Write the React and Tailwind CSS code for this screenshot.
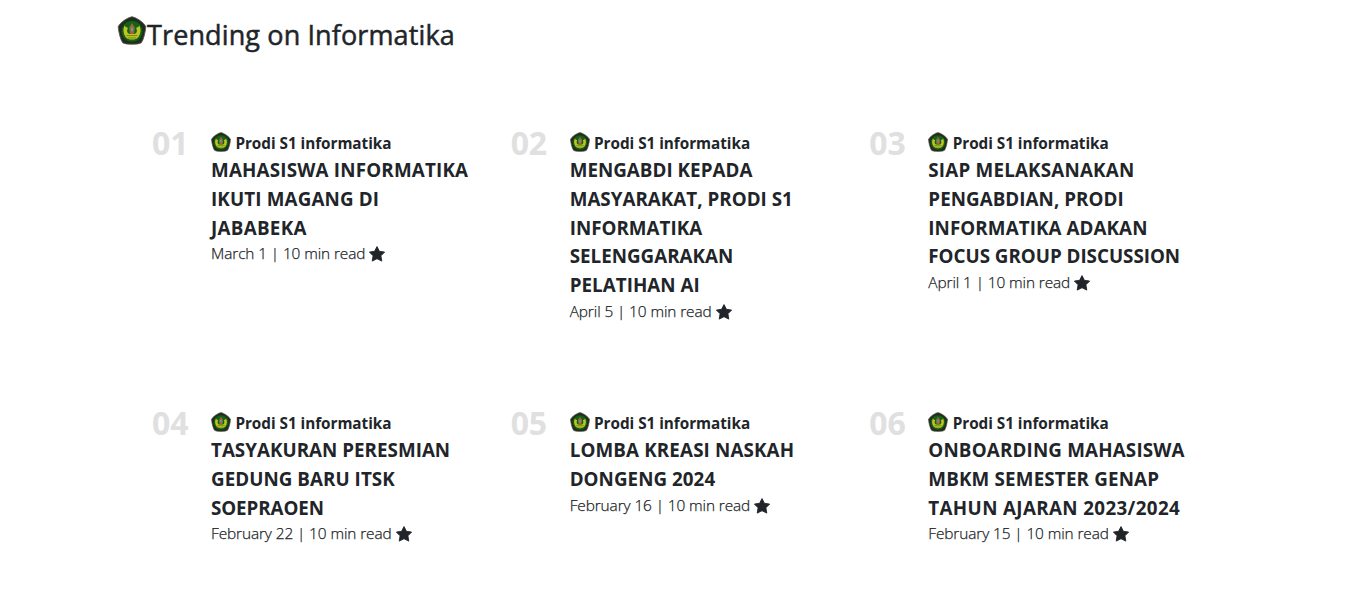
const articles = [
  {
    no: "01",
    lines: [
      ["MAHASISWA INFORMATIKA", "tracking-[0.19px]"],
      ["IKUTI MAGANG DI", "tracking-[0.14px]"],
      ["JABABEKA", "tracking-[0.3px]"],
    ],
    meta: "March 1 | 10 min read",
  },
  {
    no: "02",
    lines: [
      ["MENGABDI KEPADA", "tracking-[0.03px]"],
      ["MASYARAKAT, PRODI S1", "tracking-[0.02px]"],
      ["INFORMATIKA", "tracking-[0.01px]"],
      ["SELENGGARAKAN", "tracking-[0.01px]"],
      ["PELATIHAN AI", "tracking-[0.05px]"],
    ],
    meta: "April 5 | 10 min read",
  },
  {
    no: "03",
    lines: [
      ["SIAP MELAKSANAKAN", "tracking-[0.2px]"],
      ["PENGABDIAN, PRODI", "tracking-[0.05px]"],
      ["INFORMATIKA ADAKAN", "tracking-[0.08px]"],
      ["FOCUS GROUP DISCUSSION", "tracking-[-0.02px]"],
    ],
    meta: "April 1 | 10 min read",
  },
  {
    no: "04",
    lines: [
      ["TASYAKURAN PERESMIAN", "tracking-[0.02px]"],
      ["GEDUNG BARU ITSK", "tracking-[0.05px]"],
      ["SOEPRAOEN", "tracking-[-0.09px]"],
    ],
    meta: "February 22 | 10 min read",
  },
  {
    no: "05",
    lines: [
      ["LOMBA KREASI NASKAH", "tracking-[0.14px]"],
      ["DONGENG 2024", "tracking-[0.05px]"],
    ],
    meta: "February 16 | 10 min read",
  },
  {
    no: "06",
    lines: [
      ["ONBOARDING MAHASISWA", "tracking-[0.17px]"],
      ["MBKM SEMESTER GENAP", "tracking-[0.17px]"],
      ["TAHUN AJARAN 2023/2024", "tracking-[0.36px]"],
    ],
    meta: "February 15 | 10 min read",
  },
];

function Emblem({ className }) {
  return (
    <svg viewBox="0 0 28 28" className={className} aria-hidden="true">
      <path d="M14 .7 Q16.5 .9 21.4 4.1 Q26.4 7.6 27.3 10.2 Q27.3 13 26 18.4 Q24.4 24.4 22.8 26 Q20.5 27.3 14 27.3 Q7.5 27.3 5.2 26 Q3.6 24.4 2 18.4 Q.7 13 .7 10.2 Q1.6 7.6 6.6 4.1 Q11.5 .9 14 .7Z" fill="#222b20" stroke="#65564e" strokeWidth=".8" />
      <circle cx="14" cy="14.8" r="10.5" fill="#17601c" stroke="#0a3a0e" strokeWidth=".8" />
      <path d="M6.8 9.2 Q4.4 15.2 7.6 20 Q9.8 22.8 14 22.8 Q18.2 22.8 20.4 20 Q23.6 15.2 21.2 9.2 Q20.4 11 18 11.4 Q20 16 16.6 17.4 H11.4 Q8 16 10 11.4 Q7.6 11 6.8 9.2Z" fill="#c3c41e" />
      <path d="M14 7 L16.8 11 L16 17.4 H12 L11.2 11Z" fill="#54863b" />
      <path d="M14 7 L15.6 11 L15.7 17 H12.3 L12.4 11Z" fill="#c8512f" />
      <path d="M13 11.2h2v3.4h-2z" fill="#5aa39b" />
      <path d="M8.6 18.9h10.8M10 21.2h8" stroke="#5f8c1d" strokeWidth=".9" />
    </svg>
  );
}

function Star() {
  return (
    <svg viewBox="0 0 18 16" className="ml-[3px] h-4 w-[18px] shrink-0" fill="currentColor" stroke="currentColor" strokeWidth=".9" strokeLinejoin="round" aria-hidden="true">
      <path d="M9 .6 L11.4 5.3 L16.6 6.1 L12.9 9.8 L13.8 15.1 L9 12.7 L4.2 15.1 L5.1 9.8 L1.4 6.1 L6.6 5.3Z" />
    </svg>
  );
}

function Article({ article }) {
  return (
    <article className="flex text-[#212529]">
      <div className="w-[59px] shrink-0 text-[32px] leading-6 font-bold tracking-[-0.1px] text-[#e0e0e0]">{article.no}</div>
      <div className="min-w-0 whitespace-nowrap">
        <div className="flex h-6 items-center">
          <Emblem className="mr-[4.4px] h-5 w-5 shrink-0 -translate-y-px" />
          <span className="text-[15.3px] leading-6 font-bold tracking-[-0.04px]">Prodi S1 informatika</span>
        </div>
        <h2 className="pt-px text-[18.8px] leading-[28.8px] font-bold">
          {article.lines.map(([text, tracking]) => (
            <span key={text} className={`block ${tracking}`}>{text}</span>
          ))}
        </h2>
        <div className="flex h-6 items-center text-[15.4px] leading-6 font-light">
          <span className="tracking-[-0.1px] [-webkit-text-stroke:0.25px_#212529]">{article.meta}</span>
          <Star />
        </div>
      </div>
    </article>
  );
}

export default function App() {
  return (
    <main className="h-[593px] w-full overflow-hidden bg-white pl-[117px] font-['Open_Sans','Liberation_Sans',sans-serif] text-[#212529]">
      <header className="flex h-[131px] items-start pt-4">
        <Emblem className="h-[29px] w-[30px] shrink-0" />
        <h1 className="mt-[2px] text-[27px] leading-[34px] font-medium tracking-[0.12px] [-webkit-text-stroke:0.5px_#212529]">Trending on Informatika</h1>
      </header>
      <section className="grid auto-rows-[280px] grid-cols-[repeat(3,358.67px)] pl-[35px]">
        {articles.map((article) => (
          <Article key={article.no} article={article} />
        ))}
      </section>
    </main>
  );
}
